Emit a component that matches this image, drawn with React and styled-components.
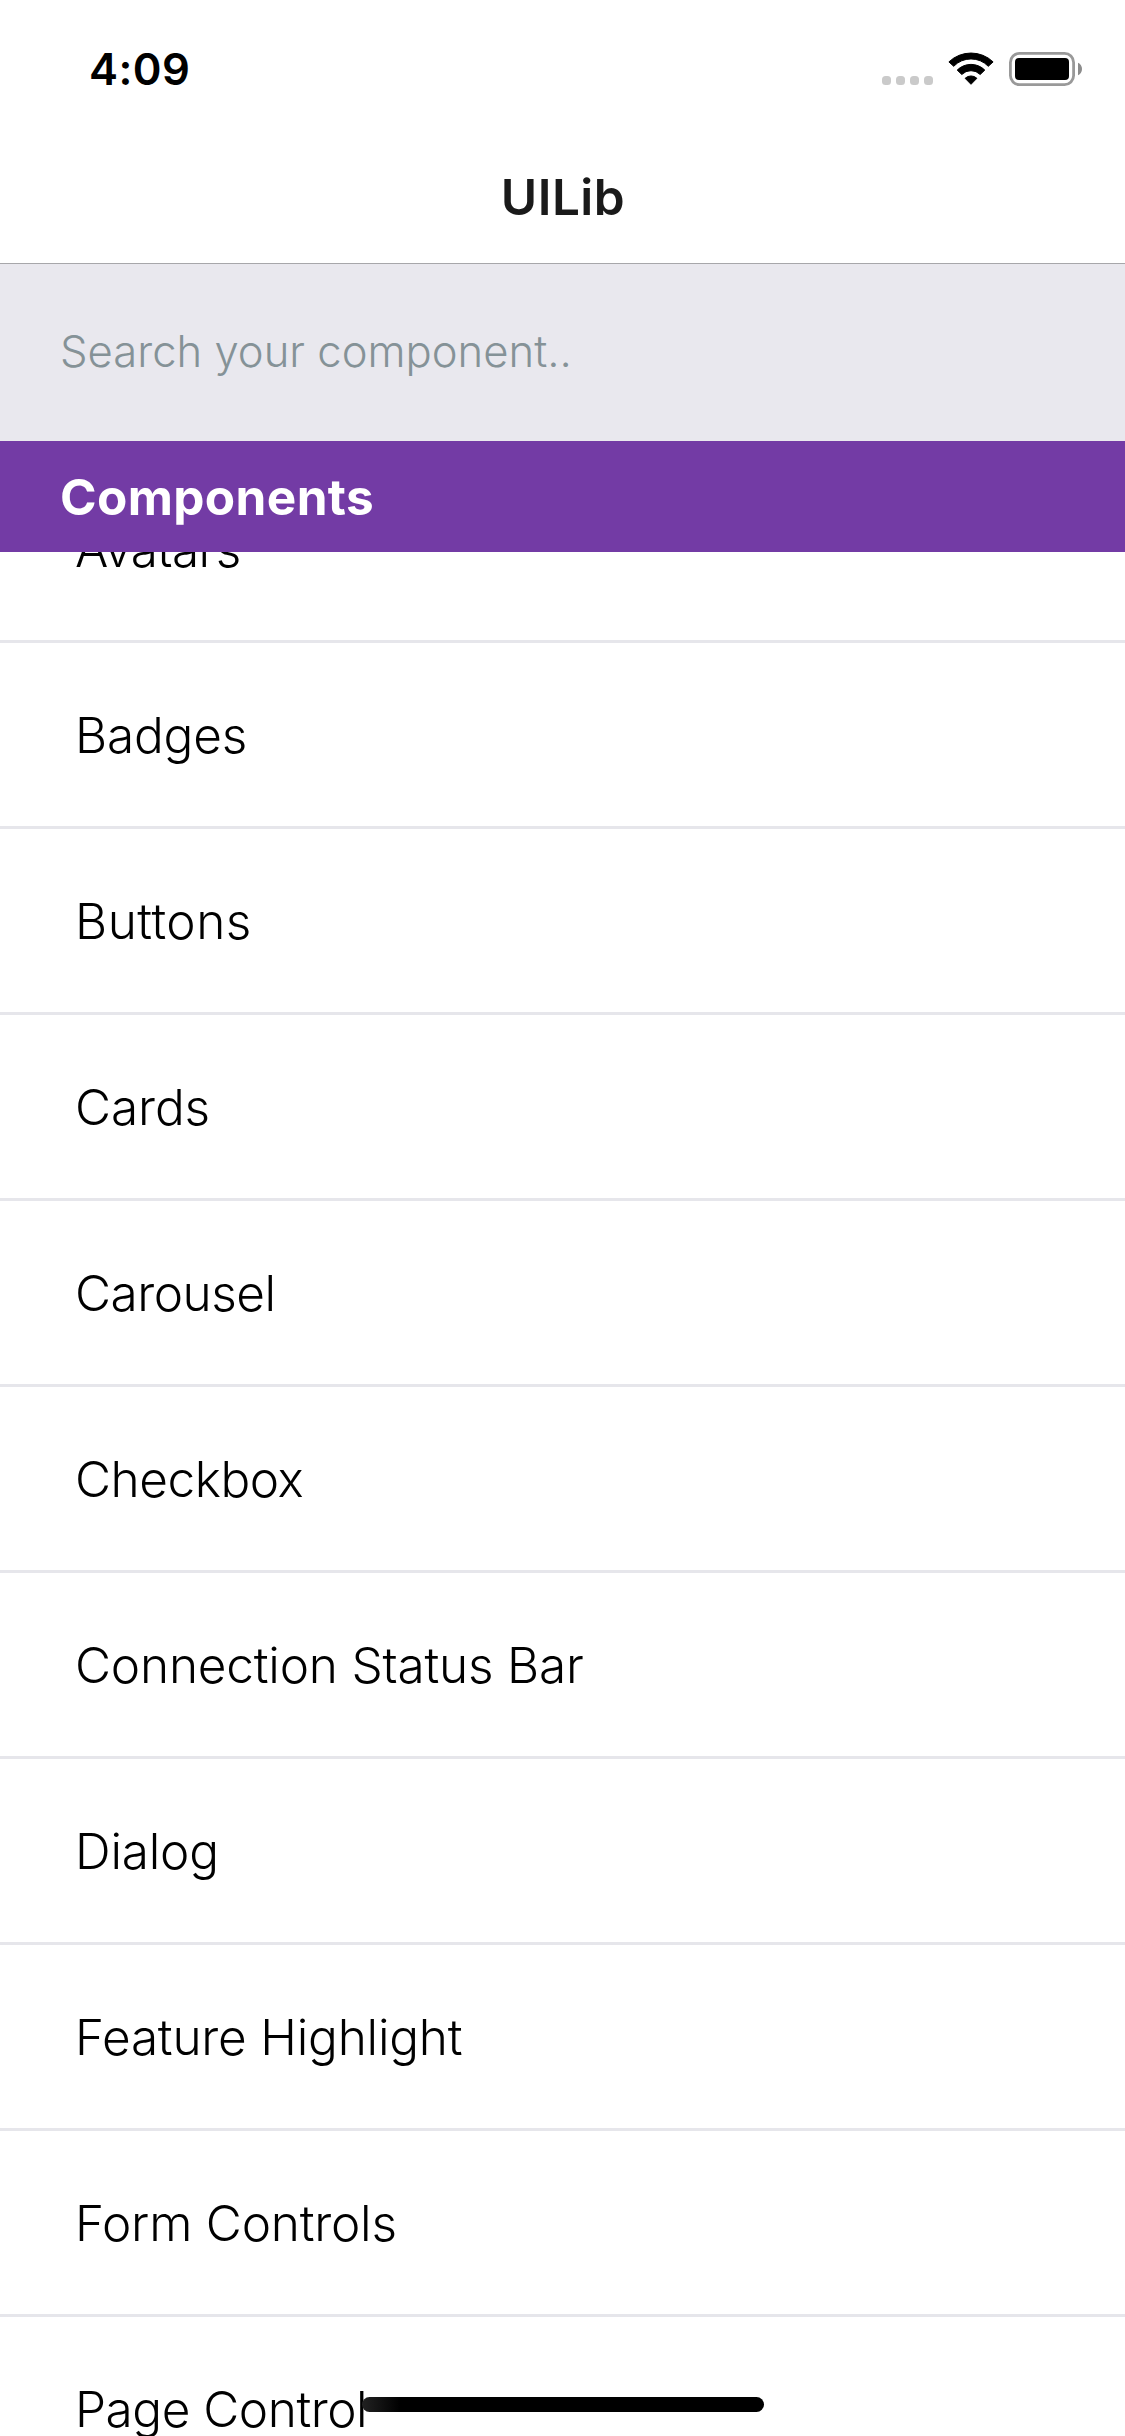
import React from 'react';
import styled, { createGlobalStyle } from 'styled-components';

const GlobalStyle = createGlobalStyle`
  *, *::before, *::after { box-sizing: border-box; }
  body {
    margin: 0;
    background: #ffffff;
    font-family: Inter, "Liberation Sans", sans-serif;
  }
`;

const Screen = styled.div`
  position: relative;
  display: flex;
  flex-direction: column;
  width: 1125px;
  height: 2436px;
  overflow: hidden;
  background: #ffffff;
`;

const StatusBar = styled.header`
  display: flex;
  flex: none;
  align-items: center;
  justify-content: space-between;
  height: 132px;
  padding: 6px 43px 0 89px;
`;

const Time = styled.time`
  padding-top: 2px;
  font-size: 43.6px;
  font-weight: 600;
  line-height: 54px;
  letter-spacing: 0.44px;
  color: #000000;
`;

const StatusIcons = styled.div`
  display: flex;
  align-items: flex-start;
  gap: 15px;
  height: 34px;

  svg { display: block; }
`;

const SignalDots = styled.div`
  display: flex;
  gap: 5px;
  padding-top: 24px;
`;

const Dot = styled.span`
  width: 9px;
  height: 9px;
  border-radius: 3.5px;
  background: #cacaca;
`;

const NavBar = styled.nav`
  display: flex;
  flex: none;
  align-items: center;
  justify-content: center;
  height: 132px;
  padding: 0 0 2px 1px;
  border-bottom: 1px solid #a7a7aa;
`;

const Title = styled.h1`
  margin: 0;
  font-size: 49.5px;
  font-weight: 600;
  line-height: 60px;
  letter-spacing: 0.48px;
  color: #1a1a1a;
`;

const SearchBar = styled.div`
  display: flex;
  flex: none;
  align-items: center;
  height: 177px;
  padding: 0 60px 2px;
  background: #e9e8ee;
`;

const SearchInput = styled.input`
  flex: 1;
  height: 60px;
  padding: 0;
  border: 0;
  outline: 0;
  background: transparent;
  font-family: inherit;
  font-size: 43.6px;
  font-weight: 300;
  color: #000000;

  &::placeholder {
    color: #859297;
    opacity: 1;
  }
`;

const SectionHeader = styled.h2`
  display: flex;
  flex: none;
  align-items: center;
  height: 111px;
  margin: 0;
  padding: 0 60px;
  background: #733ba5;
  color: #ffffff;
  font-size: 49.5px;
  font-weight: 700;
  line-height: 60px;
  letter-spacing: 0.38px;
`;

const ListViewport = styled.main`
  flex: 1;
  min-height: 0;
  overflow: hidden;
`;

const List = styled.ul`
  margin: -95px 0 0;
  padding: 0;
  list-style: none;
`;

const Row = styled.li`
  display: flex;
  align-items: center;
  height: 186px;
  padding: 0 75px;
  border-bottom: 3px solid #e6e6eb;
  font-size: 49.5px;
  font-weight: 300;
  line-height: 60px;
  letter-spacing: ${({ $tracking }) => $tracking}px;
  color: #000000;
`;

const HomeIndicator = styled.div`
  position: absolute;
  left: 362px;
  bottom: 24px;
  width: 402px;
  height: 15px;
  border-radius: 8px;
  background: linear-gradient(to right, #222222 0, #000000 38px);
`;

const WifiIcon = () => (
  <svg width="46" height="34" viewBox="0 0 46 34" stroke="#000" strokeWidth="1" strokeLinejoin="round">
    <path d="M.9 9.9A32 32 0 0 1 45.1 9.9L40.3 14.3A24 24 0 0 0 5.7 14.3Z" />
    <path d="M9.2 18.1A19.5 19.5 0 0 1 36.8 18.1L32.2 22.5A13 13 0 0 0 13.8 22.5Z" />
    <path d="M17.1 26.3A8.6 8.6 0 0 1 28.9 26.3L23 32.3Z" />
  </svg>
);

const BatteryIcon = () => (
  <svg width="73" height="34" viewBox="0 0 73 34">
    <rect x="1.4" y="1.4" width="63.2" height="31.2" rx="9" fill="none" stroke="#999" strokeWidth="2.8" />
    <rect x="6" y="6" width="54" height="22" rx="4" fill="#000" />
    <path d="M69 10.7C71.5 11.8 73 14.2 73 17S71.5 22.2 69 23.3Z" fill="#8c8c8c" />
  </svg>
);

const components = [
  { name: 'Avatars', tracking: -0.6 },
  { name: 'Badges', tracking: -0.2 },
  { name: 'Buttons', tracking: 0.5 },
  { name: 'Cards', tracking: -0.1 },
  { name: 'Carousel', tracking: -0.5 },
  { name: 'Checkbox', tracking: -0.45 },
  { name: 'Connection Status Bar', tracking: -0.2 },
  { name: 'Dialog', tracking: -0.2 },
  { name: 'Feature Highlight', tracking: -0.22 },
  { name: 'Form Controls', tracking: -0.22 },
  { name: 'Page Control', tracking: -0.48 },
];

export default function App() {
  return (
    <>
      <GlobalStyle />
      <Screen>
        <StatusBar>
          <Time>4:09</Time>
          <StatusIcons>
            <SignalDots>
              <Dot />
              <Dot />
              <Dot />
              <Dot />
            </SignalDots>
            <WifiIcon />
            <BatteryIcon />
          </StatusIcons>
        </StatusBar>
        <NavBar>
          <Title>UILib</Title>
        </NavBar>
        <SearchBar>
          <SearchInput placeholder="Search your component.." aria-label="Search" />
        </SearchBar>
        <SectionHeader>Components</SectionHeader>
        <ListViewport>
          <List>
            {components.map(({ name, tracking }) => (
              <Row key={name} $tracking={tracking}>{name}</Row>
            ))}
          </List>
        </ListViewport>
        <HomeIndicator />
      </Screen>
    </>
  );
}
